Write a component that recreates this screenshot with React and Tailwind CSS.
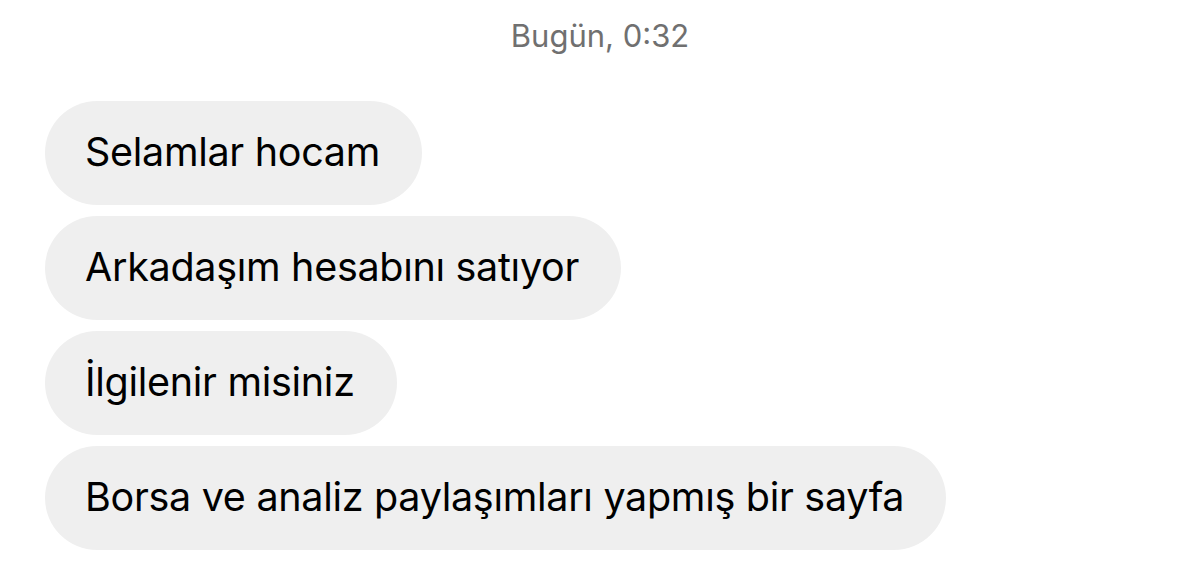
import React from "react";

const messages = [
  "Selamlar hocam",
  "Arkadaşım hesabını satıyor",
  "İlgilenir misiniz",
  "Borsa ve analiz paylaşımları yapmış bir sayfa",
];

export default function App() {
  return (
    <div className="w-[1200px] h-[575px] bg-white overflow-hidden font-['Inter',sans-serif]">
      <div className="h-[101px] pt-[16px] text-center text-[31px] text-[#707070] leading-[40px]">Bugün, 0:32</div>
      <div className="flex flex-col items-start gap-[11px] pl-[45px]">
        {messages.map((m) => (
          <div key={m} className="h-[104px] flex items-center rounded-full bg-[#efefef] pl-[40px] pr-[42px] text-[39.5px] text-black tracking-[-0.3px]">
            {m}
          </div>
        ))}
      </div>
    </div>
  );
}
